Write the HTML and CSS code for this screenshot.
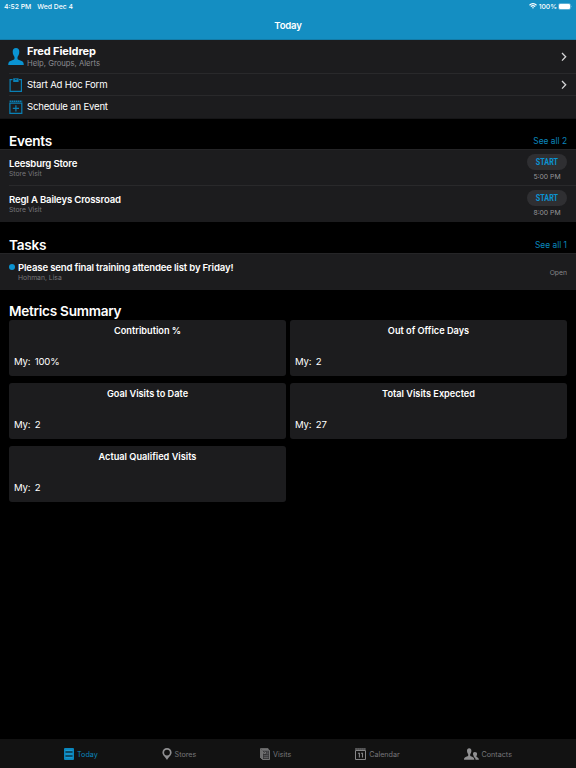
FILE: index.html
```html
<!DOCTYPE html>
<html lang="en">
<head>
  <meta charset="UTF-8" />
  <meta name="viewport" content="width=device-width, initial-scale=1.0"/>
  <title>Today</title>
  <link rel="stylesheet" href="styles.css">
</head>
<body>
  <header>
    <div class="status">
      <span class="time">4:52 PM</span>
      <span class="date">Wed Dec 4</span>
      <svg class="wifi" width="8" height="6" viewBox="0 0 16 12" fill="none" stroke="#fff" stroke-width="2.4">
        <path d="M1 4.5Q8 -2 15 4.5M3.7 7.3Q8 3.3 12.3 7.3"/>
        <path d="M5.8 9.2Q8 7.3 10.2 9.2L8 11.6Z" fill="#fff" stroke="none"/>
      </svg>
      <span class="percent">100%</span>
      <svg class="battery" width="14" height="7" viewBox="0 0 14 7">
        <rect x=".5" y=".5" width="12" height="6" rx="1.6" fill="none" stroke="#8ac8e2" stroke-width=".6"/>
        <rect x="1" y="1" width="11" height="5" rx="1" fill="#fff"/>
        <path d="M13.100 2.400q1 1.100 0 2.200z" fill="#8ac8e2"/>
      </svg>
    </div>
    <h1>Today</h1>
  </header>

  <main>
    <div class="menu">
      <div class="menu-row user">
        <svg width="16" height="18" viewBox="0 0 16 18" fill="#0a93d2">
          <path d="M8 0C5.800 0 4.600 1.500 4.700 3.800c0 1.300.3 2.600.8 3.500.4.8.9 1.300 1 1.900v1.400c0 .8-.6 1.200-1.600 1.500L2.400 12.900C.9 13.400.3 14.300.2 17h15.600c-.1-2.700-.7-3.600-2.200-4.100l-2.500-.8c-1-.3-1.600-.7-1.600-1.500V9.200c.1-.6.6-1.100 1-1.900.5-.9.8-2.200.8-3.500C11.400 1.500 10.200 0 8 0Z"/>
        </svg>
        <div class="menu-text">
          <div class="user-name">Fred Fieldrep</div>
          <div class="user-sub">Help, Groups, Alerts</div>
        </div>
        <svg class="chevron" width="6" height="10" viewBox="0 0 6 10"><path d="M1 1l3.700 3.800L1 8.600"/></svg>
      </div>
      <div class="menu-row">
        <svg width="14" height="14" viewBox="0 0 14 14" fill="none" stroke="#0a80b5" stroke-width="1.200">
          <path d="M3.500 1.600H1.100v11.800h11.300V1.600H10"/>
          <path d="M4.200.3h5.400v3.700H4.200z" fill="#0a80b5" stroke="none"/>
          <path d="M6.200 1.500h1.400" stroke="#1c1c1e" stroke-width=".8"/>
        </svg>
        <div class="menu-text">Start Ad Hoc Form</div>
        <svg class="chevron" width="6" height="10" viewBox="0 0 6 10"><path d="M1 1l3.700 3.800L1 8.600"/></svg>
      </div>
      <div class="menu-row">
        <svg width="14" height="14" viewBox="0 0 14 14" fill="none" stroke="#0a80b5" stroke-width="1.200">
          <path d="M.9 3.200h11.900v10.200H.9zM6.900 5.200v6.200M3.800 8.300H10"/>
          <path d="M.6 1.300h12.600" stroke-width="1.600" stroke-dasharray="1.600 .4"/>
        </svg>
        <div class="menu-text">Schedule an Event</div>
      </div>
    </div>

    <div class="section-head">
      <h2>Events</h2>
      <a class="see-all">See all 2</a>
    </div>
    <div class="list">
      <div class="item">
        <div class="item-text">
          <div class="item-title">Leesburg Store</div>
          <div class="item-sub">Store Visit</div>
        </div>
        <div class="item-action">
          <button><span>START</span></button>
          <div class="item-time">5:00 PM</div>
        </div>
      </div>
      <div class="item">
        <div class="item-text">
          <div class="item-title">Regl A Baileys Crossroad</div>
          <div class="item-sub">Store Visit</div>
        </div>
        <div class="item-action">
          <button><span>START</span></button>
          <div class="item-time">8:00 PM</div>
        </div>
      </div>
    </div>

    <div class="section-head tasks-head">
      <h2>Tasks</h2>
      <a class="see-all">See all 1</a>
    </div>
    <div class="list">
      <div class="item task">
        <span class="dot"></span>
        <div class="item-text">
          <div class="item-title">Please send final training attendee list by Friday!</div>
          <div class="item-sub">Hohman, Lisa</div>
        </div>
        <div class="item-status">Open</div>
      </div>
    </div>

    <div class="section-head metrics-head">
      <h2>Metrics Summary</h2>
    </div>
    <div class="metrics">
      <div class="card">
        <h3>Contribution %</h3>
        <p>My:<span>100%</span></p>
      </div>
      <div class="card">
        <h3>Out of Office Days</h3>
        <p>My:<span>2</span></p>
      </div>
      <div class="card">
        <h3>Goal Visits to Date</h3>
        <p>My:<span>2</span></p>
      </div>
      <div class="card">
        <h3>Total Visits Expected</h3>
        <p>My:<span>27</span></p>
      </div>
      <div class="card">
        <h3>Actual Qualified Visits</h3>
        <p>My:<span>2</span></p>
      </div>
    </div>
  </main>

  <nav>
    <a class="tab active">
      <svg width="10" height="12" viewBox="0 0 10 12">
        <rect width="10" height="12" rx="1" fill="#0a86bd"/>
        <path d="M1.500 4h7M1.500 8h7" stroke="#111" stroke-width="1.200"/>
        <path d="M1.500 2.400h7M1.500 6h7M1.500 9.700h7" stroke="#22a2da" stroke-width=".8"/>
      </svg>
      Today
    </a>
    <a class="tab">
      <svg width="10" height="12" viewBox="0 0 10 12">
        <path fill="#8f8f91" fill-rule="evenodd" d="M5 0a4.600 4.600 0 0 0-4.600 4.600C.4 7.400 3 8.500 5 12c2-3.500 4.600-4.600 4.600-7.400A4.600 4.600 0 0 0 5 0Zm0 1.700a2.900 2.900 0 1 1 0 5.800 2.900 2.900 0 0 1 0-5.800Z"/>
      </svg>
      Stores
    </a>
    <a class="tab">
      <svg width="10" height="12" viewBox="0 0 10 12" fill="none" stroke="#858587" stroke-width=".8">
        <path d="M.5 10V.6h7.800M1.500 11V1.500h7.300"/>
        <path d="M2.500 2.300h7v9.200h-7z" fill="#333335"/>
        <path d="M3.700 4h1.800v1.500H3.700z" fill="#111"/>
        <path d="M6.500 4h2M6.500 5.800h2M3.700 7.800h4.800M3.700 9.700h4.800" stroke-width=".6"/>
      </svg>
      Visits
    </a>
    <a class="tab calendar">
      <svg width="11" height="12" viewBox="0 0 11 12" fill="none" stroke="#858587">
        <path d="M.5 2.500h10v9H.5z"/>
        <path d="M.3 1h10.500" stroke-width="1.400" stroke-dasharray="1.500 .5"/>
        <path d="M2.900 5.200h1.500v4.300M6 5.200h1.500v4.300" stroke-width="1.100"/>
      </svg>
      Calendar
    </a>
    <a class="tab contacts">
      <svg width="15" height="12" viewBox="0 0 15 12" fill="#8f8f91">
        <path d="M5.200.2C3.700.2 3 1.200 3 2.800c0 1.500.6 2.400 1.200 3.400v1.300C4.200 8.800 0 8.300 0 11.700h10.300C10.300 8.300 6.200 8.800 6.200 7.500V6.200c.6-1 1.200-1.900 1.200-3.400 0-1.600-.7-2.600-2.200-2.600Z"/>
        <path d="M10.800 4c-1.300 0-1.900.8-1.800 2.100.1 1 .5 1.500.8 2.200v.7c1.100.5 1.600 1.400 1.800 2.700H14.900c0-2.400-2.500-1.900-2.500-3.400.3-.6.6-1.200.7-2.200C13.200 4.800 12.300 4 10.800 4Z"/>
      </svg>
      Contacts
    </a>
  </nav>
</body>
</html>
```

FILE: styles.css
```css
* {
  box-sizing: border-box;
}
body {
  margin: 0;
  height: 768px;
  display: flex;
  flex-direction: column;
  background: #000;
  color: #fff;
  font-family: Inter, "Liberation Sans", sans-serif;
  font-size: 9.6px;
  overflow: hidden;
}
h1, h2, h3, p {
  margin: 0;
}
svg {
  display: block;
  flex: none;
}
header {
  height: 40px;
  background: #148ec2;
  border-bottom: 1px solid #137ba7;
}
.status {
  display: flex;
  align-items: center;
  height: 12px;
  padding: 0 4px;
  font-size: 6.8px;
  font-weight: 500;
}
.date {
  margin-left: 6px;
}
.wifi {
  margin-left: auto;
}
.percent {
  margin: 0 1px 0 2px;
}
h1 {
  font-size: 9.6px;
  line-height: 12px;
  font-weight: 600;
  letter-spacing: -.2px;
  text-align: center;
  margin-top: 8px;
}
main {
  flex: 1;
}

/* top menu */
.menu {
  background: #1c1c1e;
  height: 79px;
  border-bottom: 1px solid #151517;
}
.menu-row {
  display: flex;
  align-items: center;
  height: 22px;
  margin-left: 9px;
  padding-right: 9px;
  border-top: 1px solid #29292b;
}
.menu-row:last-child {
  height: 23px;
}
.menu-row.user {
  height: 33px;
  margin-left: 8px;
  border-top: none;
}
.menu-text {
  flex: 1;
  margin-left: 4px;
  line-height: 12px;
  letter-spacing: -.2px;
}
.user .menu-text {
  margin-left: 3px;
  padding-top: 2px;
}
.user-name {
  font-size: 11px;
  font-weight: 700;
  line-height: 12px;
  letter-spacing: -.1px;
}
.user-sub {
  font-size: 7.7px;
  color: #8b8b90;
  line-height: 13px;
  letter-spacing: 0;
}
.chevron {
  fill: none;
  stroke: #d5d5d7;
  stroke-width: 1.3;
}

/* sections */
.section-head {
  display: flex;
  justify-content: space-between;
  align-items: flex-end;
  height: 30px;
  padding: 0 9px;
}
h2 {
  font-size: 13.6px;
  font-weight: 600;
  line-height: 16px;
  letter-spacing: -.27px;
}
.see-all {
  font-size: 8.4px;
  line-height: 16px;
  color: #0a86bd;
}
.list {
  background: #1c1c1e;
  border-top: 1px solid #252527;
}
.item {
  display: flex;
  align-items: center;
  height: 36px;
  margin-left: 9px;
  padding-right: 9px;
}
.item + .item {
  height: 37px;
  margin-top: -1px;
  padding-bottom: 1px;
  border-top: 1px solid #29292b;
}
.tasks-head {
  height: 31px;
}
.item-text {
  flex: 1;
}
.item-title {
  font-size: 9.6px;
  font-weight: 600;
  line-height: 12px;
  letter-spacing: -.17px;
}
.item-sub {
  font-size: 6.8px;
  line-height: 8px;
  color: #77777b;
}
.item-action {
  width: 40px;
  text-align: center;
}
button {
  display: block;
  width: 40px;
  height: 16px;
  padding: 0;
  border: none;
  border-radius: 8px;
  background: #2f2f32;
  color: #0a93d2;
  font: 700 9px/16px Roboto, sans-serif;
}
/* condensed label */
button span {
  display: inline-block;
  transform: scaleX(.8);
}
.item-time {
  margin-top: 2px;
  font-size: 6.8px;
  line-height: 10px;
  color: #98989c;
}
.dot {
  width: 6px;
  height: 6px;
  margin: 0 3px 10px 0;
  border-radius: 50%;
  background: #0a93d2;
}
.item-status {
  font-size: 6.8px;
  color: #88888c;
}

/* metric cards */
.metrics-head {
  height: 30.4px;
}
.metrics-head h2 {
  line-height: 17px;
}
.metrics {
  display: grid;
  grid-template-columns: 277px 277px;
  gap: 7px 4px;
  padding: 0 9px;
}
.card {
  height: 56px;
  padding: 4.6px 5px;
  border-radius: 3px;
  background: #1c1c1e;
}
h3 {
  font-size: 9.2px;
  line-height: 12px;
  font-weight: 600;
  text-align: center;
}
.card p {
  margin-top: 19px;
  font-size: 9.6px;
  line-height: 12px;
  letter-spacing: -.2px;
}
.card span {
  margin-left: 4.5px;
}

/* tab bar */
nav {
  display: flex;
  justify-content: space-between;
  height: 29px;
  padding: 1px 64px 0;
  background: #121212;
}
.tab {
  display: flex;
  align-items: center;
  gap: 3px;
  font-size: 7.2px;
  color: #77777a;
}
.active {
  color: #0a86bd;
}
```
